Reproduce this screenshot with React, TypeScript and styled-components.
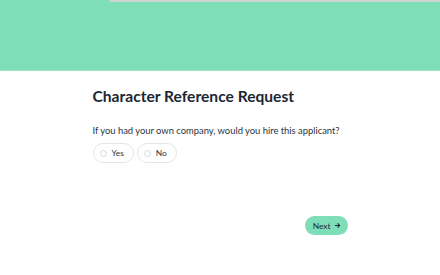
import styled, { createGlobalStyle } from 'styled-components';

const GlobalStyle = createGlobalStyle`
  * { box-sizing: border-box; }
  html, body { margin: 0; padding: 0; background: #fff; }
  body { font-family: Lato, 'Noto Sans', sans-serif; color: #1e2935; }
`;

const S_Page = styled.div`
  width: 440px;
  height: 275px;
  overflow: hidden;
`;

const S_Header = styled.header`
  height: 71px;
  background: #7ddeb7;
  border-bottom: 1px solid #9be6c8;
  display: flex;
  justify-content: flex-end;
  align-items: flex-start;
`;

const S_Progress = styled.div`
  width: 330px;
  height: 2px;
  background: #cfd3d1;
`;

const S_Wrapper = styled.main`
  width: 255px;
  margin: 0 auto;
  padding-top: 15px;
  display: flex;
  flex-direction: column;
`;

const S_Title = styled.h1`
  margin: 0;
  font-size: 15.6px;
  line-height: 20px;
  font-weight: 700;
  color: #1c2733;
`;

const S_Question = styled.p`
  margin: 18px 0 0;
  font-size: 9.4px;
  line-height: 14px;
  color: #2a3440;
  white-space: nowrap;
`;

const S_Options = styled.div`
  display: flex;
  gap: 3px;
  margin-top: 5px;
`;

const S_Option = styled.button`
  display: flex;
  align-items: center;
  gap: 5px;
  height: 20px;
  padding: 0 9px 0 6px;
  border: 1px solid #e3e6e8;
  border-radius: 10px;
  background: #fff;
  font-family: inherit;
  font-size: 8.4px;
  color: #2a3440;
  cursor: pointer;
`;

const S_Radio = styled.span`
  width: 7px;
  height: 7px;
  border-radius: 50%;
  border: 1px solid #d4d8db;
`;

const S_Footer = styled.div`
  display: flex;
  justify-content: flex-end;
  margin-top: 53px;
`;

const S_Next = styled.button`
  height: 19px;
  padding: 0 7px 0 8px;
  border: none;
  border-radius: 10px;
  background: #7ddeb7;
  font-family: inherit;
  font-size: 8.4px;
  color: #1f2a36;
  display: flex;
  align-items: center;
  gap: 3px;
  cursor: pointer;
`;

const App = () => {
  return (
    <S_Page>
      <GlobalStyle />
      <S_Header>
        <S_Progress />
      </S_Header>
      <S_Wrapper>
        <S_Title>Character Reference Request</S_Title>
        <S_Question>If you had your own company, would you hire this applicant?</S_Question>
        <S_Options>
          <S_Option>
            <S_Radio />
            Yes
          </S_Option>
          <S_Option>
            <S_Radio />
            No
          </S_Option>
        </S_Options>
        <S_Footer>
          <S_Next>
            Next
            <svg width="7" height="7" viewBox="0 0 8 8" fill="none" stroke="#1f2a36" strokeWidth="1.2">
              <path d="M1 4h5.5M4 1.5 6.5 4 4 6.5" />
            </svg>
          </S_Next>
        </S_Footer>
      </S_Wrapper>
    </S_Page>
  );
};

export default App;
